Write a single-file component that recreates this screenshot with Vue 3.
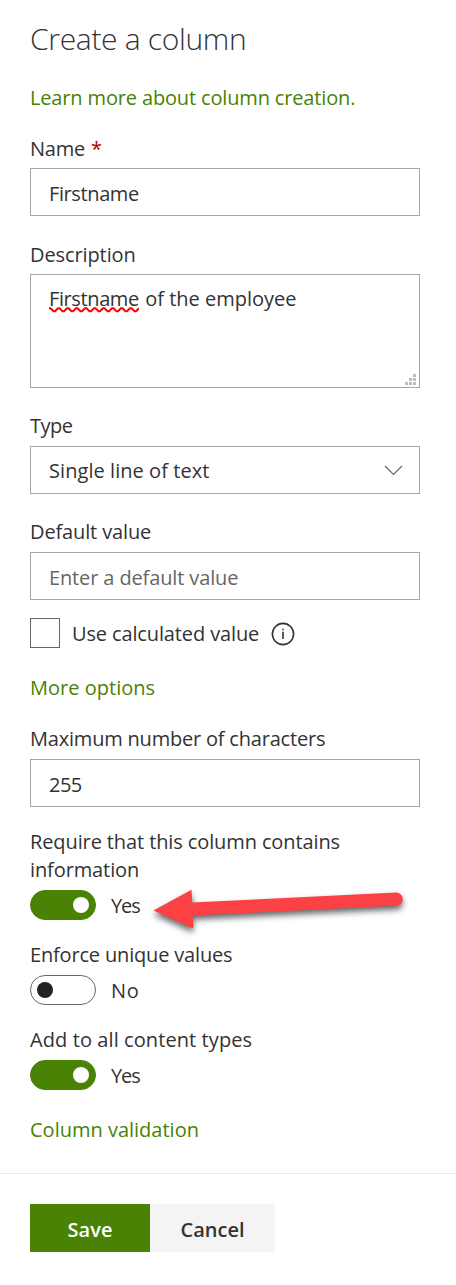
<script setup>
import { ref } from 'vue'

const name = ref('Firstname')
const defaultValue = ref('')
const maxChars = ref('255')
const toggles = ref([
  { id: 'require', label: 'Require that this column contains information', on: true },
  { id: 'unique', label: 'Enforce unique values', on: false },
  { id: 'content', label: 'Add to all content types', on: true },
])
</script>

<template>
  <main class="panel">
    <section class="body">
      <h1 class="title">Create a column</h1>
      <a class="link learn">Learn more about column creation.</a>

      <div class="field name-field">
        <label class="label"><span class="t-name">Name</span><span class="required">*</span></label>
        <input v-model="name" class="input t-first" type="text" />
      </div>

      <div class="field desc-field">
        <label class="label t-desc">Description</label>
        <div class="textarea">
          <span class="misspelled t-first">Firstname<svg class="squiggle" width="90" height="6" viewBox="0 0 90 6">
            <path d="M0 1.3 l1.5 0 l3 3 l1.5 0 l3 -3 l1.5 0 l3 3 l1.5 0 l3 -3 l1.5 0 l3 3 l1.5 0 l3 -3 l1.5 0 l3 3 l1.5 0 l3 -3 l1.5 0 l3 3 l1.5 0 l3 -3 l1.5 0 l3 3 l1.5 0 l3 -3 l1.5 0 l3 3 l1.5 0 l3 -3 l1.5 0 l3 3 l1.5 0 l3 -3 l1.5 0 l3 3 l1.5 0 l3 -3 l1.5 0 l3 3 l1.5 0 l3 -3" />
          </svg></span> of the employee
          <svg class="grip" width="11" height="11" viewBox="0 0 11 11">
            <path d="M8 0h3v3h-3zM4 4h3v3h-3zM8 4h3v3h-3zM0 8h3v3h-3zM4 8h3v3h-3zM8 8h3v3h-3z" />
          </svg>
        </div>
      </div>

      <div class="field type-field">
        <label class="label t-type">Type</label>
        <div class="input select">
          <span class="t-single">Single line of text</span>
          <svg width="19" height="11" viewBox="0 0 19 11"><path d="M1 1 L9.5 9.5 L18 1" /></svg>
        </div>
      </div>

      <div class="field default-field">
        <label class="label t-default">Default value</label>
        <input v-model="defaultValue" class="input t-default" type="text" placeholder="Enter a default value" />
      </div>

      <div class="check-row">
        <span class="checkbox"></span>
        <span class="t-use">Use calculated value</span>
        <svg class="info" width="24" height="24" viewBox="0 0 24 24">
          <circle cx="12" cy="12" r="10.6" />
          <path d="M12 9.8V17M12 6.7V8.3" />
        </svg>
      </div>

      <a class="link more">More options</a>

      <div class="field max-field">
        <label class="label t-max">Maximum number of characters</label>
        <input v-model="maxChars" class="input t-255" type="text" />
      </div>

      <div v-for="t in toggles" :key="t.id" class="toggle-field" :class="t.id">
        <div class="label">{{ t.label }}</div>
        <div class="toggle-row">
          <button type="button" class="toggle" :class="{ on: t.on }" @click="t.on = !t.on">
            <span class="knob"></span>
          </button>
          <span :class="t.on ? 't-yes' : 't-no'">{{ t.on ? 'Yes' : 'No' }}</span>
        </div>
        <svg v-if="t.id === 'require'" class="arrow" width="270" height="60" viewBox="0 0 270 60">
          <path d="M12.5 30.5 L50.5 9.8 L51.3 22.5 L255.5 12.5 A6.6 6.6 0 0 1 256.3 25.6 L51.8 35.6 L52.3 48.5 Z" />
        </svg>
      </div>

      <a class="link validation">Column validation</a>
    </section>

    <footer class="footer">
      <button type="button" class="btn save">Save</button>
      <button type="button" class="btn cancel">Cancel</button>
    </footer>
  </main>
</template>

<style>
body { margin: 0; background: #fff; }
</style>

<style scoped>
.panel {
  width: 456px;
  height: 1285px;
  overflow: hidden;
  background: #fff;
  color: #333;
  font: 400 20px/28px "Open Sans", "Noto Sans", sans-serif;
}
.body {
  box-sizing: border-box;
  height: 1173px;
  padding: 19px 36px 0 30px;
  display: flex;
  flex-direction: column;
}
.title {
  margin: 0;
  height: 40px;
  font-size: 30px;
  font-weight: 300;
  line-height: 40px;
  letter-spacing: -0.32px;
}
.link { color: #498205; white-space: nowrap; }
.learn { margin-top: 25px; letter-spacing: -0.15px; }
.field { display: flex; flex-direction: column; }
.name-field { margin-top: 23px; }
.desc-field { margin-top: 25px; }
.type-field, .default-field { margin-top: 24px; }
.label { height: 28px; margin-bottom: 5px; white-space: nowrap; }
.type-field .label, .default-field .label, .max-field .label { margin-bottom: 6px; }
.required { margin-left: 6px; color: #a80000; }
.input, .textarea {
  box-sizing: border-box;
  width: 390px;
  border: 1px solid #a6a6a6;
  border-radius: 0;
  background: #fff;
  color: #333;
  font: inherit;
  outline: 0;
}
.input { height: 48px; margin: 0; padding: 2px 18px 0; }
.input::placeholder { color: #666; opacity: 1; }
.textarea { position: relative; height: 114px; padding: 10px 18px; white-space: nowrap; }
.misspelled { position: relative; display: inline-block; width: 91px; }
.squiggle { position: absolute; left: 0; bottom: 0; }
.squiggle path { fill: none; stroke: #f00; stroke-width: 2; }
.grip { position: absolute; right: 3px; bottom: 2px; fill: #bdbdbd; }
.select { display: flex; align-items: center; justify-content: space-between; padding: 0 16px 0 18px; }
.select svg { fill: none; stroke: #666; stroke-width: 1.2; }
.check-row { display: flex; align-items: center; height: 30px; margin-top: 18px; }
.checkbox { box-sizing: border-box; width: 30px; height: 30px; margin-right: 12px; border: 1px solid #666; }
.info { margin: 2px 0 0 12px; fill: none; stroke: #333; stroke-width: 1.6; }
.more { margin-top: 26px; letter-spacing: 0.02px; }
.max-field { margin-top: 23px; }
.toggle-field { position: relative; }
.toggle-field .label { height: auto; margin-bottom: 6px; }
.require { margin-top: 21px; letter-spacing: -0.11px; }
.require .label { white-space: normal; }
.unique { margin-top: 21px; letter-spacing: -0.17px; }
.content { margin-top: 21px; letter-spacing: 0.09px; }
.toggle-row { display: flex; align-items: center; height: 30px; gap: 15px; }
.toggle {
  box-sizing: border-box;
  display: flex;
  align-items: center;
  width: 66px;
  height: 30px;
  padding: 0 6px;
  border: 1px solid #666;
  border-radius: 15px;
  background: #fff;
}
.toggle.on { justify-content: flex-end; border-color: #498205; background: #498205; }
.knob { width: 16px; height: 16px; border-radius: 50%; background: #222; }
.toggle.on .knob { background: #fff; }
.arrow {
  position: absolute;
  left: 111px;
  top: 52px;
  fill: #fc4144;
  filter: drop-shadow(0 4px 3px rgba(0, 0, 0, 0.6));
}
.validation { margin-top: 26px; }
.footer {
  box-sizing: border-box;
  display: flex;
  height: 112px;
  padding: 30px 30px 0;
  border-top: 1px solid #eaeaea;
}
.btn { height: 48px; padding: 3px 0 0; border: 0; border-radius: 0; font: inherit; font-weight: 600; }
.save { width: 120px; background: #498205; color: #fff; }
.cancel { width: 125px; background: #f4f4f4; color: #333; }
.t-name { letter-spacing: -0.23px; }
.t-first { letter-spacing: -0.39px; }
.t-desc { letter-spacing: -0.1px; }
.t-type { letter-spacing: -0.5px; }
.t-single { padding-top: 2px; letter-spacing: 0.06px; }
.t-default { letter-spacing: -0.13px; }
.t-use { padding-top: 2px; letter-spacing: -0.13px; }
.t-max { letter-spacing: -0.2px; }
.t-255 { letter-spacing: -0.5px; }
.t-yes { padding-top: 2px; letter-spacing: -1.1px; }
.t-no { padding-top: 2px; letter-spacing: 0.8px; }
</style>
